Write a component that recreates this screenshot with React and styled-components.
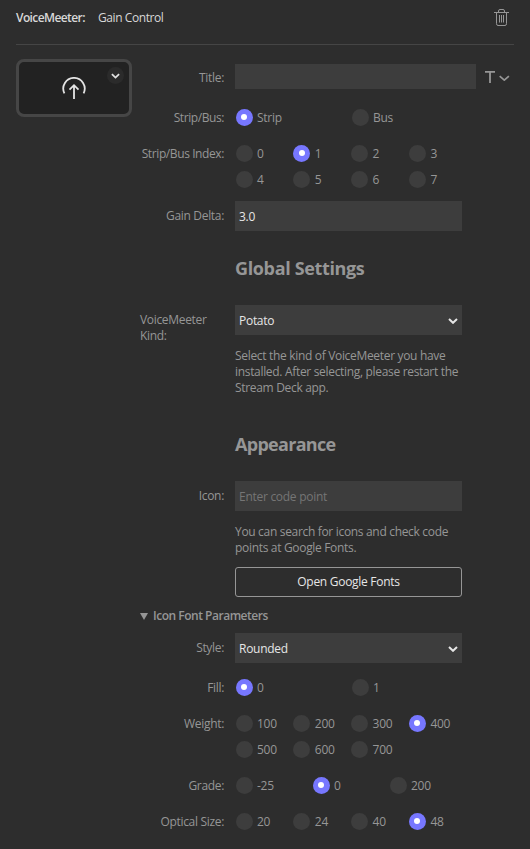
import React from "react";
import styled, { createGlobalStyle } from "styled-components";

const Global = createGlobalStyle`
  *, *::before, *::after { box-sizing: border-box; }
  body { margin: 0; background: #2d2d2d; }
  button, input { font: inherit; letter-spacing: inherit; }
`;

const Panel = styled.main`
  width: 530px;
  height: 849px;
  overflow: hidden;
  padding: 0 16px;
  background: #2d2d2d;
  color: #969696;
  font-family: "Open Sans", "Noto Sans", sans-serif;
  font-size: 12px;
  line-height: 16px;
  letter-spacing: -0.28px;
`;

const Header = styled.header`
  display: flex;
  align-items: center;
  height: 45px;
  padding-bottom: 8px;
  border-bottom: 1px solid #454545;
  color: #d8d8d8;
`;

const PluginName = styled.span`
  width: 82px;
  font-weight: 600;
  letter-spacing: -0.6px;
  white-space: nowrap;
`;

const ActionName = styled.span`
  flex: 1;
  letter-spacing: -0.42px;
`;

const IconButton = styled.button`
  display: flex;
  margin-right: 5px;
  padding: 0 0 2px;
  border: 0;
  background: none;
  color: #969696;
`;

const Body = styled.div`
  display: flex;
  padding-top: 14px;
`;

const Preview = styled.div`
  position: relative;
  flex: none;
  display: grid;
  place-items: center;
  width: 116px;
  height: 58px;
  margin-right: 8px;
  border: 3px solid #464646;
  border-radius: 8px;
  background: #222;
`;

const PreviewMenu = styled.button`
  position: absolute;
  top: 5px;
  right: 5px;
  display: grid;
  place-items: center;
  width: 17px;
  height: 17px;
  padding: 0;
  border: 0;
  border-radius: 50%;
  background: #2b2b2b;
  color: #e0e0e0;
`;

const Form = styled.div`
  flex: 1;
  display: flex;
  flex-direction: column;
`;

const Row = styled.div`
  display: flex;
  align-items: flex-start;
  margin-top: ${(p) => p.$top ?? 10}px;
`;

const Label = styled.div`
  flex: none;
  width: 84px;
  margin-right: 11px;
  padding-top: ${(p) => p.$pad ?? 6}px;
  text-align: ${(p) => (p.$wrap ? "left" : "right")};
  white-space: ${(p) => (p.$wrap ? "normal" : "nowrap")};
  letter-spacing: ${(p) => p.$ls ?? -0.32}px;
`;

const Field = styled.input`
  width: ${(p) => p.$w ?? 227}px;
  height: ${(p) => p.$h ?? 30}px;
  padding: 1px 4px 0;
  border: 0;
  border-radius: 0;
  background: #3d3d3d;
  color: #e6e6e6;
  &::placeholder { color: #757575; opacity: 1; }
`;

const Select = styled.div`
  display: flex;
  align-items: center;
  justify-content: space-between;
  width: 227px;
  height: 30px;
  padding: 1px 4px 0;
  background: #3d3d3d;
  color: #e6e6e6;
`;

const TextTools = styled.div`
  display: flex;
  align-items: center;
  gap: 4px;
  height: 25px;
  margin-left: 9px;
  color: #969696;
`;

const Options = styled.div`
  display: grid;
  grid-template-columns: repeat(${(p) => p.$cols}, ${(p) => p.$step}px);
  grid-auto-rows: 26px;
`;

const Option = styled.label`
  display: flex;
  align-items: center;
  gap: 4.5px;
  padding-left: 0.5px;
  letter-spacing: -0.25px;
`;

const OptionText = styled.span`
  padding-top: 1px;
`;

const Dot = styled.span`
  flex: none;
  display: grid;
  place-items: center;
  width: 17px;
  height: 17px;
  border-radius: 50%;
  background: ${(p) => (p.$on ? "#7777ff" : "#3d3d3d")};
  &::after {
    content: "";
    width: 6px;
    height: 6px;
    border-radius: 50%;
    background: ${(p) => (p.$on ? "#fff" : "transparent")};
  }
`;

const Heading = styled.h2`
  margin: ${(p) => p.$top}px 0 0 95px;
  font-size: 18px;
  line-height: 24px;
  font-weight: 700;
  letter-spacing: ${(p) => p.$ls}px;
`;

const Help = styled.p`
  width: 240px;
  margin: ${(p) => p.$top}px 0 0 95px;
`;

const HelpLine = styled.span`
  display: block;
  white-space: nowrap;
  letter-spacing: ${(p) => p.$ls ?? -0.32}px;
`;

const OutlineButton = styled.button`
  width: 227px;
  height: 30px;
  margin: 11px 0 0 95px;
  padding: 0;
  border: 1px solid #969696;
  border-radius: 3px;
  background: transparent;
  color: #e6e6e6;
`;

const Summary = styled.div`
  display: flex;
  align-items: center;
  gap: 5px;
  margin-top: 11px;
  font-weight: 600;
  letter-spacing: -0.48px;
`;

const Chevron = ({ w = 10, h = 6, s = 2 }) => (
  <svg width={w} height={h} viewBox="0 0 10 6" fill="none" stroke="currentColor" strokeWidth={s}>
    <path d="M1 1 L5 4.8 L9 1" />
  </svg>
);

const Trash = () => (
  <svg width="15" height="17" viewBox="0 0 15 17" fill="none" stroke="currentColor">
    <path d="M0 3.5H15M4.5 3.5V2Q4.5 .5 6 .5H9Q10.5 .5 10.5 2V3.5M2.5 3.5V14.5Q2.5 16.5 4 16.5H11Q12.5 16.5 12.5 14.5V3.5M5.5 6V13.5M7.5 6V13.5M9.5 6V13.5" />
  </svg>
);

const GainIcon = () => (
  <svg width="24" height="22" viewBox="0 0 24 22" fill="none" stroke="#e4e4e4" strokeWidth="2">
    <path d="M2.4 16.3A10.7 10.7 0 1 1 21.6 16.3" strokeWidth="1.8" />
    <path d="M12 22V8.8M7.5 12.7L12 8.2L16.5 12.7" strokeWidth="1.8" />
  </svg>
);

const TextMenuIcon = () => (
  <svg width="25" height="14" viewBox="0 0 25 14" fill="none" stroke="currentColor">
    <path d="M0 1.8H10M5 1.8V13" strokeWidth="1.8" />
    <path d="M14.7 6.2L19.3 10.2L23.9 6.2" strokeWidth="1.7" strokeLinejoin="round" />
  </svg>
);

function RadioRow({ label, values, selected, cols, step, ls, top }) {
  return (
    <Row $top={top}>
      <Label $ls={ls}>{label}</Label>
      <Options $cols={cols} $step={step}>
        {values.map((v) => (
          <Option key={v}>
            <Dot $on={v === selected} />
            <OptionText>{v}</OptionText>
          </Option>
        ))}
      </Options>
    </Row>
  );
}

export default function App() {
  return (
    <Panel>
      <Global />
      <Header>
        <PluginName>VoiceMeeter:</PluginName>
        <ActionName>Gain Control</ActionName>
        <IconButton aria-label="Delete"><Trash /></IconButton>
      </Header>
      <Body>
        <Preview>
          <GainIcon />
          <PreviewMenu aria-label="Icon menu"><Chevron w={9} h={6} /></PreviewMenu>
        </Preview>
        <Form>
          <Row $top={5}>
            <Label>Title:</Label>
            <Field $w={241} $h={25} aria-label="Title" />
            <TextTools>
              <TextMenuIcon />
            </TextTools>
          </Row>
          <RadioRow top={15} label="Strip/Bus:" values={["Strip", "Bus"]} selected="Strip" cols={2} step={116} ls={-0.42} />
          <RadioRow label="Strip/Bus Index:" values={["0", "1", "2", "3", "4", "5", "6", "7"]} selected="1" cols={4} step={57.8} ls={-0.4} />
          <Row $top={9}>
            <Label $pad={7}>Gain Delta:</Label>
            <Field defaultValue="3.0" aria-label="Gain Delta" />
          </Row>
          <Heading $top={25} $ls={-0.35}>Global Settings</Heading>
          <Row $top={25}>
            <Label $wrap $pad={7}>VoiceMeeter Kind:</Label>
            <Select>Potato<Chevron /></Select>
          </Row>
          <Help $top={4}>
            <HelpLine>Select the kind of VoiceMeeter you have</HelpLine>
            <HelpLine>installed. After selecting, please restart the</HelpLine>
            <HelpLine>Stream Deck app.</HelpLine>
          </Help>
          <Heading $top={36} $ls={-0.7}>Appearance</Heading>
          <Row $top={25}>
            <Label $pad={7}>Icon:</Label>
            <Field placeholder="Enter code point" aria-label="Icon" />
          </Row>
          <Help $top={13}>
            <HelpLine>You can search for icons and check code</HelpLine>
            <HelpLine>points at Google Fonts.</HelpLine>
          </Help>
          <OutlineButton>Open Google Fonts</OutlineButton>
          <Summary>
            <svg width="8" height="7" viewBox="0 0 8 7" fill="currentColor"><path d="M0 0H8L4 7Z" /></svg>
            Icon Font Parameters
          </Summary>
          <Row $top={9}>
            <Label $pad={7}>Style:</Label>
            <Select>Rounded<Chevron /></Select>
          </Row>
          <RadioRow top={11} label="Fill:" values={["0", "1"]} selected="0" cols={2} step={116} />
          <RadioRow label="Weight:" values={["100", "200", "300", "400", "500", "600", "700"]} selected="400" cols={4} step={57.8} />
          <RadioRow label="Grade:" values={["-25", "0", "200"]} selected="0" cols={3} step={77} />
          <RadioRow label="Optical Size:" values={["20", "24", "40", "48"]} selected="48" cols={4} step={57.8} />
        </Form>
      </Body>
    </Panel>
  );
}
